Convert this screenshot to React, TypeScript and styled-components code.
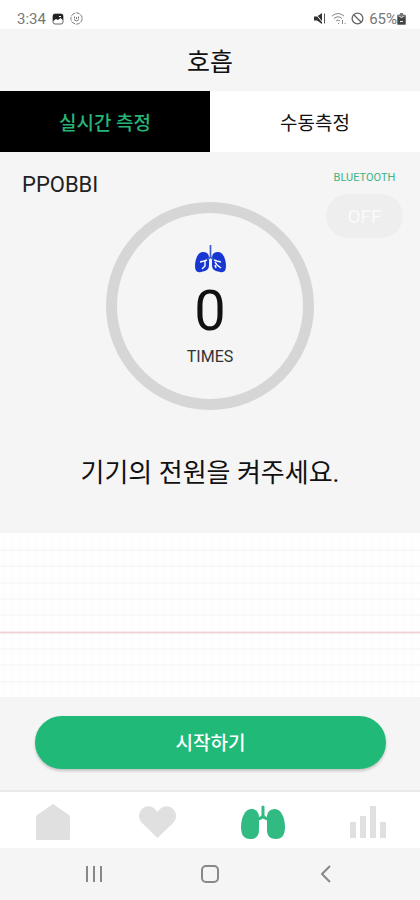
import React, { useState } from "react";
import styled, { createGlobalStyle } from "styled-components";

const GlobalStyle = createGlobalStyle`
  *, *::before, *::after { box-sizing: border-box; }
  body {
    margin: 0;
    background: #f5f5f5;
    color: #111;
    font-family: Roboto, "Noto Sans CJK KR", sans-serif;
  }
  button { font: inherit; border: 0; padding: 0; cursor: pointer; }
`;

const Screen = styled.div`
  min-height: 100vh;
  display: flex;
  flex-direction: column;
`;

const StatusBar = styled.div`
  height: 29px;
  padding: 8px 14px 0 17px;
  display: flex;
  align-items: center;
  justify-content: space-between;
  background: #fff;
  color: #777;
  font-size: 15px;
  line-height: 20px;
`;

const StatusGroup = styled.div<{ $gap: number }>`
  display: flex;
  align-items: center;
  gap: ${({ $gap }) => $gap}px;
`;

const Battery = styled.span`
  display: flex;
  align-items: center;
`;

const Header = styled.header`
  height: 62px;
  padding-top: 5px;
  display: flex;
  align-items: center;
  justify-content: center;
`;

const Title = styled.h1`
  margin: 0;
  font-size: 25px;
  line-height: 36px;
  font-weight: 400;
`;

const Tabs = styled.div`
  display: grid;
  grid-template-columns: 1fr 1fr;
`;

const Tab = styled.button<{ $active: boolean }>`
  height: 61px;
  padding-top: 4px;
  font-size: 19px;
  line-height: 28px;
  font-weight: ${({ $active }) => ($active ? 500 : 400)};
  background: ${({ $active }) => ($active ? "#000" : "#fff")};
  color: ${({ $active }) => ($active ? "#26b478" : "#111")};
`;

const Measure = styled.main`
  flex: 1;
  display: grid;
  grid-template-columns: 1fr auto 1fr;
  grid-template-rows: auto 1fr;
  align-items: start;
`;

const DeviceName = styled.div`
  padding: 19px 0 0 22px;
  font-size: 22px;
  line-height: 28px;
  color: #222;
`;

const Dial = styled.section`
  width: 208px;
  height: 208px;
  margin-top: 50px;
  border: 11px solid #d6d6d6;
  border-radius: 50%;
  display: flex;
  flex-direction: column;
  align-items: center;
  padding-top: 32px;
`;

const Count = styled.div`
  margin-top: 10px;
  font-size: 56px;
  line-height: 56px;
`;

const Unit = styled.div`
  margin-top: 8px;
  font-size: 16px;
  line-height: 20px;
  color: #333;
`;

const Connection = styled.div`
  justify-self: end;
  width: 77px;
  margin: 18px 17px 0 0;
  display: flex;
  flex-direction: column;
  align-items: center;
  gap: 8px;
`;

const ConnectionLabel = styled.span`
  font-size: 11px;
  line-height: 16px;
  color: #3db387;
`;

const ConnectionButton = styled.button`
  width: 100%;
  height: 44px;
  border-radius: 22px;
  background: #eeeeee;
  color: #fafafa;
  font-size: 19px;
`;

const Prompt = styled.p`
  grid-column: 1 / -1;
  margin: 45px 0 0;
  text-align: center;
  font-size: 26px;
  line-height: 36px;
`;

const Chart = styled.svg`
  display: block;
  width: 100%;
  height: 164px;
  background: #fefefe;
`;

const Action = styled.div`
  padding: 19px 34px 21px 35px;
`;

const StartButton = styled.button`
  display: block;
  width: 100%;
  height: 53px;
  padding-top: 3px;
  border-radius: 27px;
  background: #20b978;
  color: #fff;
  font-size: 19px;
  line-height: 28px;
  font-weight: 500;
  box-shadow: 0 2px 3px rgba(0, 0, 0, 0.2);
`;

const NavBar = styled.nav`
  height: 58px;
  border-top: 2px solid #e9e9e9;
  background: #fff;
  display: grid;
  grid-template-columns: repeat(4, 1fr);
`;

const NavLink = styled.a<{ $active?: boolean }>`
  display: flex;
  align-items: center;
  justify-content: center;
  padding-top: 4px;
  color: ${({ $active }) => ($active ? "#31ba82" : "#e0e0e0")};
`;

const SystemBar = styled.div`
  height: 52px;
  padding: 0 20%;
  display: flex;
  justify-content: space-between;
`;

const SystemButton = styled.button`
  width: 20px;
  display: flex;
  align-items: center;
  justify-content: center;
  background: transparent;
  color: #888;
`;

const PictureIcon = () => (
  <svg width="12" height="12" viewBox="0 0 12 12" aria-hidden="true">
    <rect x="1" y="1" width="10" height="10" rx="2" fill="#fff" stroke="#666" />
    <path d="M1 2.5Q1 1 2.5 1h7Q11 1 11 2.5V7L8.5 5 6 7 4 6 1 8z" fill="#222" />
    <path d="M7 3h2v1H7z" fill="#fff" />
  </svg>
);

const FaceIcon = () => (
  <svg width="13" height="13" viewBox="0 0 13 13" fill="none" stroke="#777" aria-hidden="true">
    <circle cx="6.5" cy="6.5" r="5.6" strokeDasharray="4 1" />
    <path d="M4.5 4.5v2M8.5 4.5v2M4 7.5q2.5 3 5 0M6.5 5v2" />
  </svg>
);

const MuteIcon = () => (
  <svg width="12" height="13" viewBox="0 0 12 13" aria-hidden="true">
    <path d="M0 4.5h3L8 1v11L3 8.5H0z" fill="#333" />
    <path d="M1 1l8 10" stroke="#fff" />
    <path d="M10.5 1.5v10" stroke="#555" />
  </svg>
);

const WifiIcon = () => (
  <svg width="15" height="13" viewBox="0 0 15 13" fill="none" stroke="#888" aria-hidden="true">
    <path d="M1 4q6-5 12 0M3 6.5q4-3.5 8 0M5 9q2-2 4 0M7 11.5h1M11.5 8v4M13.5 11.5h1" />
  </svg>
);

const BlockIcon = () => (
  <svg width="13" height="13" viewBox="0 0 13 13" fill="none" stroke="#666" strokeWidth="1.3" aria-hidden="true">
    <circle cx="6.5" cy="6.5" r="5.4" />
    <path d="M2.7 2.7l7.6 7.6" />
  </svg>
);

const BatteryIcon = () => (
  <svg width="9" height="12" viewBox="0 0 9 12" aria-hidden="true">
    <path d="M3 0h3v1.5h1.5Q9 1.5 9 3v7.5Q9 12 7.5 12h-6Q0 12 0 10.5V3q0-1.5 1.5-1.5H3z" fill="#777" />
    <path d="M1 4h7v7H1z" fill="#444" />
    <path d="M2.5 3l2 2 2-2M3 8.5h3" stroke="#eee" fill="none" />
  </svg>
);

const LungsIcon = () => (
  <svg width="44" height="34" viewBox="0 0 44 34" aria-hidden="true">
    <path d="M10 4C4 4 0 13 0 22c0 8 3 12 9 12s9-3 9-9V12c0-5-3-8-8-8z" fill="currentColor" />
    <path d="M34 4c6 0 10 9 10 18 0 8-3 12-9 12s-9-3-9-9V12c0-5 3-8 8-8z" fill="currentColor" />
    <path d="M22 2v9q-1 2-5 3M22 11q1 2 5 3" stroke="currentColor" strokeWidth="3" strokeLinecap="round" fill="none" />
  </svg>
);

const BlueLungsIcon = () => (
  <svg width="31" height="28" viewBox="0 0 31 28" aria-hidden="true">
    <path d="M8 7C3 7 0 14 0 21c0 5 2 7 6 6l4-1c3-1 4-3 4-6v-7c0-4-2-6-6-6z" fill="#1637d2" />
    <path d="M23 7c5 0 8 7 8 14 0 5-2 7-6 6l-4-1c-3-1-4-3-4-6v-7c0-4 2-6 6-6z" fill="#1637d2" />
    <path d="M12 15l-3 1-4 1M10 16v5l-3 3M19 15l3 1 4 1M20 17l2 3 4 3M20 20l1 3" stroke="#f5f5f5" strokeWidth="1.5" fill="none" />
    <path d="M15.5 0v12l-3 2.5M15.5 12l3 2.5" stroke="#3f5cd0" strokeWidth="1.7" fill="none" />
  </svg>
);

const HomeIcon = () => (
  <svg width="34" height="36" viewBox="0 0 34 36" fill="currentColor" aria-hidden="true">
    <path d="M17 0l16 11q1 1 1 2v22q0 1-1 1H1q-1 0-1-1V13q0-1 1-2z" />
  </svg>
);

const HeartIcon = () => (
  <svg width="37" height="32" viewBox="0 0 37 32" fill="currentColor" aria-hidden="true">
    <path d="M18.5 32L3 17C-1 13-1 7 3 3s11-4 15.5 3C23 -1 30-1 34 3s4 10 0 14z" />
  </svg>
);

const BarsIcon = () => (
  <svg width="36" height="32" viewBox="0 0 36 32" fill="currentColor" aria-hidden="true">
    <path d="M0 16h6v16H0zM10 10h6v22h-6zM20 0h6v32h-6zM30 16h6v16h-6z" />
  </svg>
);

const gridRows = [17, 33, 50, 66, 82, 116, 132, 149];

const BreathChart = () => (
  <Chart role="img" aria-label="호흡 그래프">
    <defs>
      <pattern id="columns" width="8" height="164" patternUnits="userSpaceOnUse">
        <path d="M4.5 0v164" stroke="#fbfbfb" />
      </pattern>
    </defs>
    <rect width="100%" height="100%" fill="url(#columns)" />
    {gridRows.map((y) => (
      <rect key={y} y={y - 1} width="100%" height="2" fill="#f8f8f8" />
    ))}
    <rect y="98" width="100%" height="3" fill="#faeaec" />
    <rect y="99" width="100%" height="1" fill="#ecd2d7" />
  </Chart>
);

const tabs = ["실시간 측정", "수동측정"];

export default function App() {
  const [selected, setSelected] = useState(0);
  return (
    <>
      <GlobalStyle />
      <Screen>
        <StatusBar>
          <StatusGroup $gap={6}>
            <span>3:34</span>
            <PictureIcon />
            <FaceIcon />
          </StatusGroup>
          <StatusGroup $gap={5}>
            <MuteIcon />
            <WifiIcon />
            <BlockIcon />
            <Battery>
              65%
              <BatteryIcon />
            </Battery>
          </StatusGroup>
        </StatusBar>
        <Header>
          <Title>호흡</Title>
        </Header>
        <Tabs role="tablist">
          {tabs.map((label, i) => (
            <Tab
              key={label}
              type="button"
              role="tab"
              aria-selected={selected === i}
              $active={selected === i}
              onClick={() => setSelected(i)}
            >
              {label}
            </Tab>
          ))}
        </Tabs>
        <Measure>
          <DeviceName>PPOBBI</DeviceName>
          <Dial>
            <BlueLungsIcon />
            <Count>0</Count>
            <Unit>TIMES</Unit>
          </Dial>
          <Connection>
            <ConnectionLabel id="bluetooth-label">BLUETOOTH</ConnectionLabel>
            <ConnectionButton type="button" aria-describedby="bluetooth-label">
              OFF
            </ConnectionButton>
          </Connection>
          <Prompt>기기의 전원을 켜주세요.</Prompt>
        </Measure>
        <BreathChart />
        <Action>
          <StartButton type="button">시작하기</StartButton>
        </Action>
        <NavBar>
          <NavLink href="#home" aria-label="홈"><HomeIcon /></NavLink>
          <NavLink href="#heart" aria-label="심박"><HeartIcon /></NavLink>
          <NavLink href="#breath" aria-label="호흡" aria-current="page" $active><LungsIcon /></NavLink>
          <NavLink href="#stats" aria-label="통계"><BarsIcon /></NavLink>
        </NavBar>
        <SystemBar>
          <SystemButton type="button" aria-label="최근 앱">
            <svg width="18" height="18" viewBox="0 0 18 18" stroke="currentColor" strokeWidth="2" aria-hidden="true">
              <path d="M2 1v16M9 1v16M16 1v16" />
            </svg>
          </SystemButton>
          <SystemButton type="button" aria-label="홈 화면">
            <svg width="18" height="18" viewBox="0 0 18 18" fill="none" stroke="currentColor" strokeWidth="2" aria-hidden="true">
              <rect x="1" y="1" width="16" height="16" rx="4" />
            </svg>
          </SystemButton>
          <SystemButton type="button" aria-label="뒤로">
            <svg width="10" height="18" viewBox="0 0 10 18" fill="none" stroke="currentColor" strokeWidth="2" aria-hidden="true">
              <path d="M9 1L1 9l8 8" />
            </svg>
          </SystemButton>
        </SystemBar>
      </Screen>
    </>
  );
}
